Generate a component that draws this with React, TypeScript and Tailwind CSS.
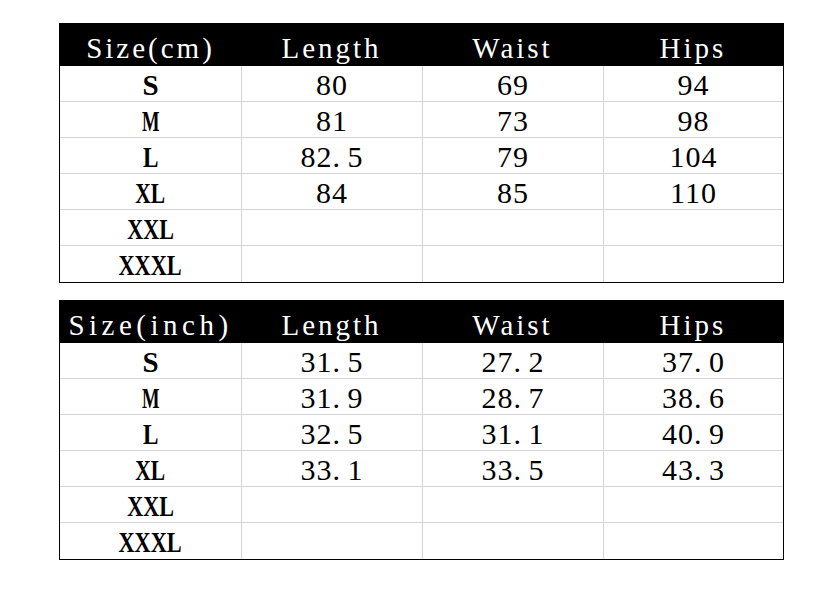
import type { ReactNode } from 'react';

type Row = [string, string, string, string];

const cmRows: Row[] = [
    ['S', '80', '69', '94'],
    ['M', '81', '73', '98'],
    ['L', '82.5', '79', '104'],
    ['XL', '84', '85', '110'],
    ['XXL', '', '', ''],
    ['XXXL', '', '', ''],
];

const inchRows: Row[] = [
    ['S', '31.5', '27.2', '37.0'],
    ['M', '31.9', '28.7', '38.6'],
    ['L', '32.5', '31.1', '40.9'],
    ['XL', '33.1', '33.5', '43.3'],
    ['XXL', '', '', ''],
    ['XXXL', '', '', ''],
];

// the labels in the picture are narrow, so squeeze each one a bit
const labelScale: Record<string, string> = {
    S: 'scale-x-100',
    M: 'scale-x-[0.64]',
    L: 'scale-x-[0.8]',
    XL: 'scale-x-[0.74]',
    XXL: 'scale-x-[0.76]',
    XXXL: 'scale-x-[0.77]',
};

// digits are already half-width; give the dot the same width
function Num({ value }: { value: string }) {
    const [whole, frac] = value.split('.');
    if (frac === undefined) return <span className="tracking-[1px]">{value}</span>;
    return (
        <span className="tracking-[1px]">
            {whole}
            <span className="inline-block w-[15px] text-left">.</span>
            {frac}
        </span>
    );
}

function SizeTable({ headers, rows }: { headers: string[]; rows: Row[] }) {
    const headCell = (text: string, i: number): ReactNode => (
        <div
            key={i}
            className={`flex h-[42px] items-center justify-center pt-[6px] text-[29px] leading-none text-white ${
                i === 0 && text.length > 8 ? 'tracking-[4.5px]' : 'tracking-[3px]'
            }`}
        >
            {text}
        </div>
    );

    return (
        <div className="w-[725px] border border-black">
            <div className="grid grid-cols-[181px_181px_181px_1fr] bg-black">
                {headers.map(headCell)}
            </div>
            {rows.map((row, r) => (
                <div
                    key={r}
                    className={`grid h-[36px] grid-cols-[181px_181px_181px_1fr] ${
                        r < rows.length - 1 ? 'border-b border-[#d4d4d4]' : ''
                    }`}
                >
                    <div className="flex items-center justify-center pt-[3px] text-[29px] font-semibold leading-none text-black">
                        <span className={`inline-block ${labelScale[row[0]]}`}>{row[0]}</span>
                    </div>
                    {row.slice(1).map((v, c) => (
                        <div
                            key={c}
                            className="flex items-center justify-center border-l border-[#d4d4d4] pt-[3px] text-[30px] leading-none text-black"
                        >
                            {v && <Num value={v} />}
                        </div>
                    ))}
                </div>
            ))}
        </div>
    );
}

export default function App() {
    return (
        <div className="min-h-[591px] w-[820px] bg-white pl-[59px] pt-[23px] [font-family:'Liberation_Serif',serif]">
            <div className="flex flex-col gap-[17px]">
                <SizeTable headers={['Size(cm)', 'Length', 'Waist', 'Hips']} rows={cmRows} />
                <SizeTable headers={['Size(inch)', 'Length', 'Waist', 'Hips']} rows={inchRows} />
            </div>
        </div>
    );
}
